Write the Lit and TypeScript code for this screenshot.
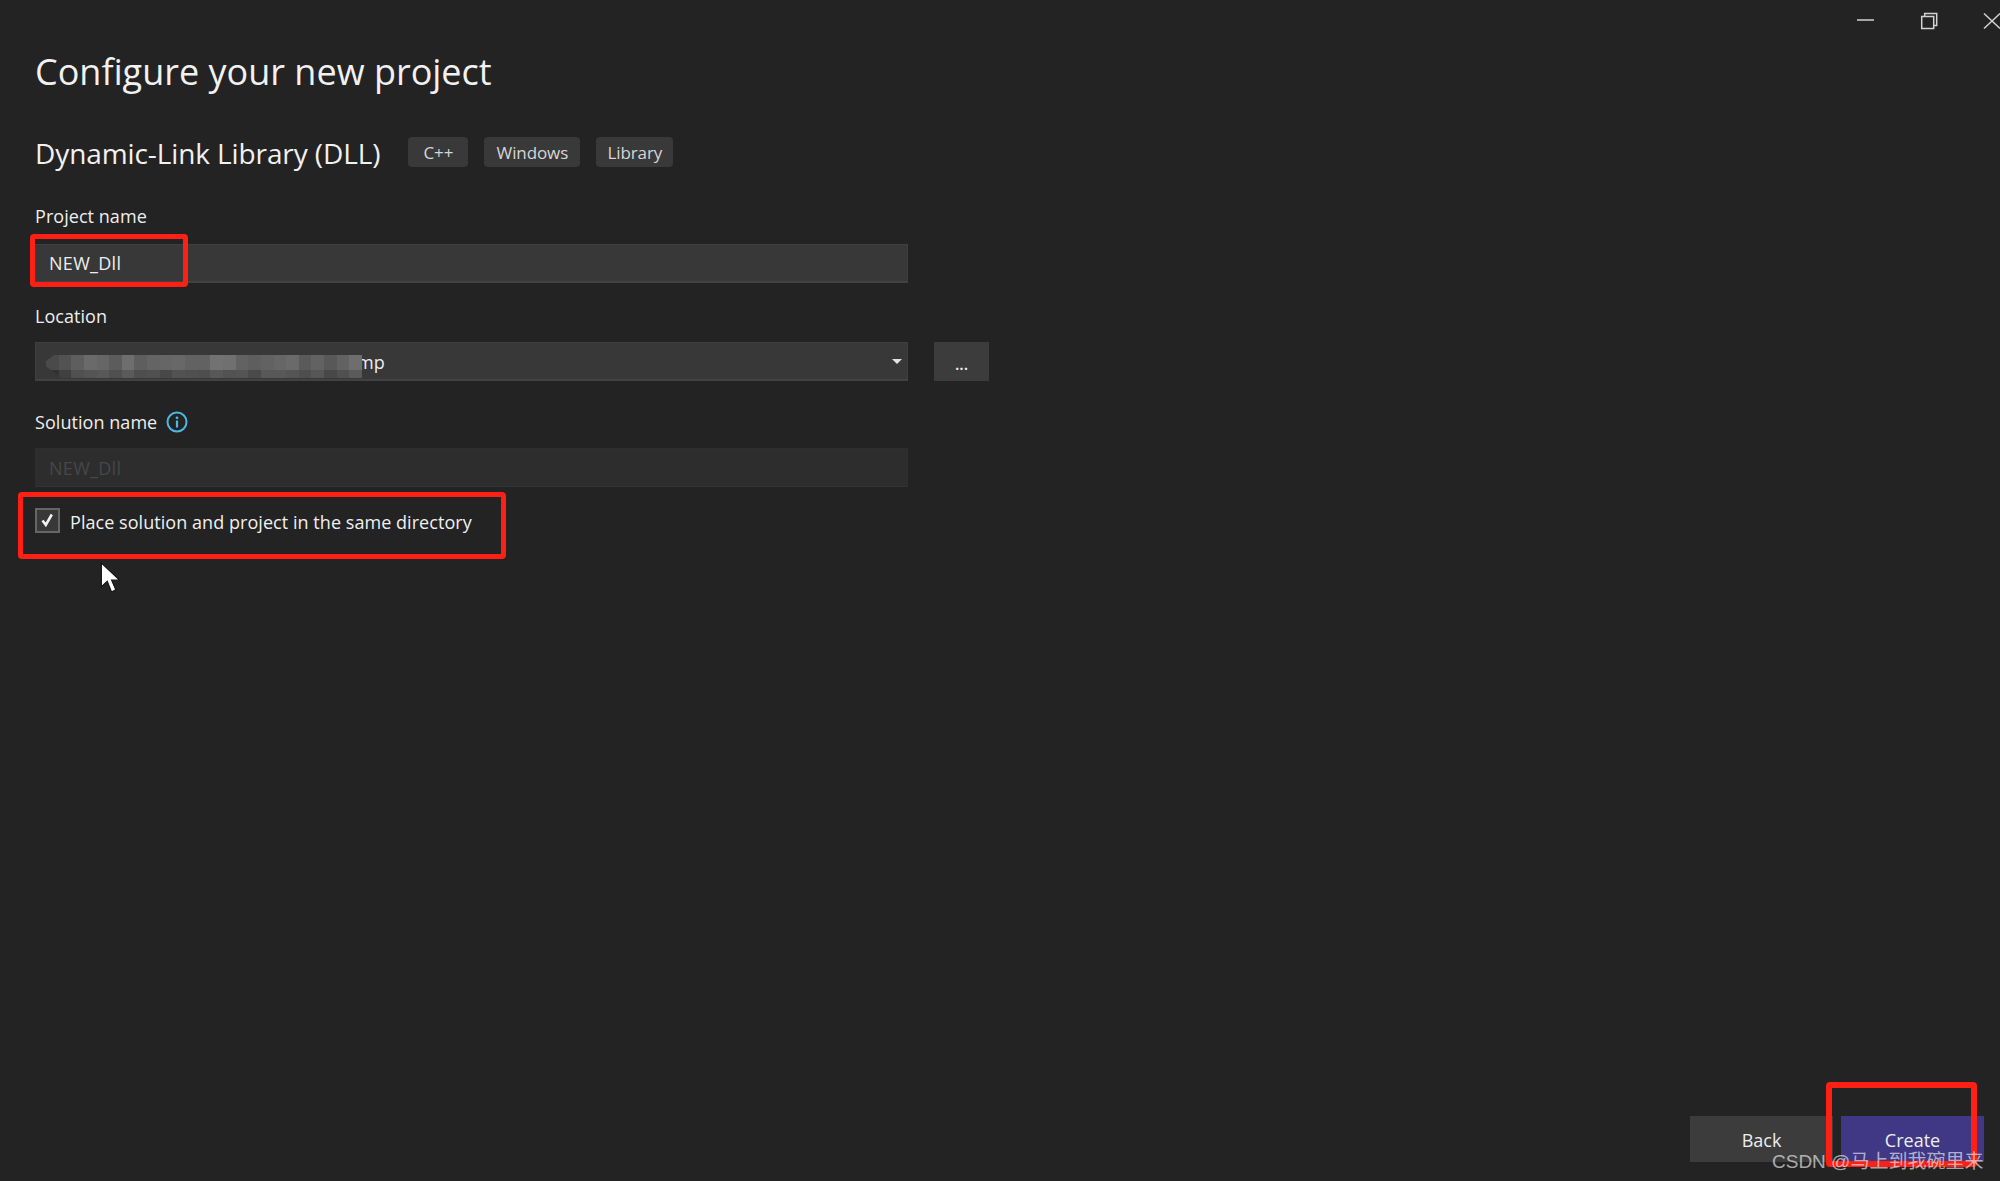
import { LitElement, html, css, svg } from "lit";
import { customElement } from "lit/decorators.js";

const mosaic: number[][] = [
  [0x4a,0x52,0x5e,0x6a,0x66,0x5c,0x6e,0x5e,0x64,0x66,0x68,0x62,0x62,0x72,0x70,0x62,0x5e,0x62,0x66,0x6a,0x5a,0x62,0x58,0x62,0x6e],
  [0x32,0x40,0x50,0x54,0x58,0x50,0x5a,0x4e,0x50,0x48,0x52,0x50,0x4e,0x58,0x52,0x54,0x4a,0x58,0x58,0x54,0x4e,0x56,0x48,0x50,0x5a],
];

@customElement("app-root")
export class AppRoot extends LitElement {
  static styles = css`
    :host {
      display: block;
      position: relative;
      height: 100vh;
      background: #232323;
      color: #f1f1f1;
      font-family: "Open Sans", "Noto Sans", sans-serif;
      overflow: hidden;
    }
    .page { display: flex; flex-direction: column; height: 100%; }
    .winbar { height: 48px; display: flex; justify-content: flex-end; }
    .winbar svg { display: block; }
    .body { padding-left: 35px; display: flex; flex-direction: column; align-items: flex-start; }
    h1 { margin: 0; font-weight: 400; font-size: 36px; line-height: 48px; height: 48px; }
    .sub { margin-top: 41px; height: 30px; display: flex; align-items: center; }
    h2 { margin: 0 28px 0 0; padding-top: 2px; font-weight: 400; font-size: 28px; line-height: 30px; letter-spacing: -0.1px; }
    .chip { background: #393939; border-radius: 4px; height: 30px; display: flex; align-items: center; justify-content: center; font-size: 17px; color: #d6d6d6; margin-right: 16px; letter-spacing: -0.1px; }
    .label { font-size: 18px; line-height: 24px; height: 24px; color: #eee; display: flex; align-items: center; gap: 9px; letter-spacing: 0.05px; }
    .l1 { margin-top: 37px; }
    .l2 { margin-top: 21px; }
    .l3 { margin-top: 29px; }
    .input { width: 873px; height: 39px; box-sizing: border-box; background: #383838; border: 1px solid #3f3f3f; border-bottom: 2px solid #424242; margin-top: 16px; padding-left: 13px; display: flex; align-items: center; font-size: 18px; letter-spacing: 0.3px; color: #ededed; }
    .loc-row { display: flex; gap: 25px; margin-top: 14px; }
    .loc-row .input { margin-top: 0; padding-left: 10px; }
    .mosaic { display: grid; grid-template-rows: 15px 8px; margin-top: 11px; position: relative; clip-path: polygon(8px 0, 100% 0, 100% 100%, 16px 100%, 0 50%, 0 6px); }
    .mrow { display: flex; }
    .cell { width: 12.65px; }
    .mp { margin-left: -5px; padding-top: 1px; letter-spacing: 0; }
    .caret { margin-left: auto; margin-right: 5px; width: 0; height: 0; border-left: 5px solid transparent; border-right: 5px solid transparent; border-top: 5px solid #e2e2e2; }
    .dots { width: 55px; height: 39px; margin-left: 1px; background: #3c3c3c; display: flex; align-items: center; justify-content: center; font-size: 16px; padding-top: 5px; box-sizing: border-box; color: #eee; font-weight: 600; }
    .disabled { background: #2d2d2d; border-color: #2f2f2f; border-bottom: 1px solid #333; margin-top: 14px; color: #474747; }
    .check { margin-top: 19px; display: flex; align-items: center; font-size: 18px; letter-spacing: 0.05px; color: #f0f0f0; }
    .check span { padding-top: 4px; }
    .box { width: 25px; height: 25px; box-sizing: border-box; background: #383838; border: 2px solid #666; margin-right: 10px; display: flex; align-items: center; justify-content: center; }
    .footer { margin-top: auto; display: flex; justify-content: flex-end; gap: 8px; padding: 0 16px 19px 0; }
    .btn { width: 143px; height: 46px; padding-top: 2px; box-sizing: border-box; display: flex; align-items: center; justify-content: center; font-size: 18px; background: #3c3c3c; color: #eee; }
    .primary { background: #403885; }
    .mark { position: absolute; box-sizing: border-box; border: 5px solid #ff2015; border-radius: 4px; }
    .m1 { left: 30px; top: 234px; width: 158px; height: 53px; }
    .m2 { left: 18px; top: 492px; width: 488px; height: 67px; }
    .m3 { left: 1826px; top: 1082px; width: 151px; height: 85px; border-width: 6px; }
    .cursor { position: absolute; left: 100px; top: 562px; }
    .wm { position: absolute; left: 1772px; top: 1150px; font-family: "Liberation Sans", "Noto Sans CJK SC", sans-serif; font-size: 19px; line-height: 24px; color: rgba(255,255,255,0.62); white-space: nowrap; }
  `;

  private cells(row: number[]) {
    return row.map((v) => html`<div class="cell" style="background: rgb(${v},${v},${v})"></div>`);
  }

  render() {
    return html`
      <div class="page">
        <div class="winbar">
          <svg width="170" height="48" viewBox="0 0 170 48" fill="none" stroke="#d2d2d2" stroke-width="1.5">
            ${svg`<path d="M27 20h17"/>`}
            ${svg`<path d="M94.700 16.500v-3h12v12h-3.200"/><rect x="91.700" y="16.500" width="12" height="12"/>`}
            ${svg`<path d="M154 13.500 170 28.500M170 13.500 154 28.500"/>`}
          </svg>
        </div>
        <div class="body">
          <h1>Configure your new project</h1>
          <div class="sub">
            <h2>Dynamic-Link Library (DLL)</h2>
            <div class="chip" style="width:60px">C++</div>
            <div class="chip" style="width:96px">Windows</div>
            <div class="chip" style="width:77px">Library</div>
          </div>
          <div class="label l1">Project name</div>
          <div class="input">NEW_Dll</div>
          <div class="label l2">Location</div>
          <div class="loc-row">
            <div class="input">
              <div class="mosaic">
                ${mosaic.map((r) => html`<div class="mrow">${this.cells(r)}</div>`)}
              </div>
              <span class="mp">mp</span>
              <span class="caret"></span>
            </div>
            <div class="dots">...</div>
          </div>
          <div class="label l3">
            Solution name
            <svg width="22" height="22" viewBox="0 0 22 22" fill="none">
              <circle cx="11" cy="11" r="9.500" stroke="#4db8e8" stroke-width="2"/>
              <circle cx="11" cy="6.800" r="1.400" fill="#4db8e8"/>
              <path d="M11 9.500v7" stroke="#4db8e8" stroke-width="2.200"/>
            </svg>
          </div>
          <div class="input disabled">NEW_Dll</div>
          <div class="check">
            <div class="box">
              <svg width="17" height="17" viewBox="0 0 17 17" fill="none">
                <path d="M3.500 8.500 6.800 12.800 12.800 2.500" stroke="#f2f2f2" stroke-width="2.600"/>
              </svg>
            </div>
            <span>Place solution and project in the same directory</span>
          </div>
        </div>
        <div class="footer">
          <div class="btn">Back</div>
          <div class="btn primary">Create</div>
        </div>
      </div>
      <div class="mark m1"></div>
      <div class="mark m2"></div>
      <div class="mark m3"></div>
      <svg class="cursor" width="22" height="32" viewBox="0 0 20 30">
        <path d="M1 1V23L6.500 18 10.500 28 14.500 26 10.500 17H18Z" fill="#fff" stroke="#111" stroke-width="1"/>
      </svg>
      <div class="wm">CSDN @马上到我碗里来</div>
    `;
  }
}
